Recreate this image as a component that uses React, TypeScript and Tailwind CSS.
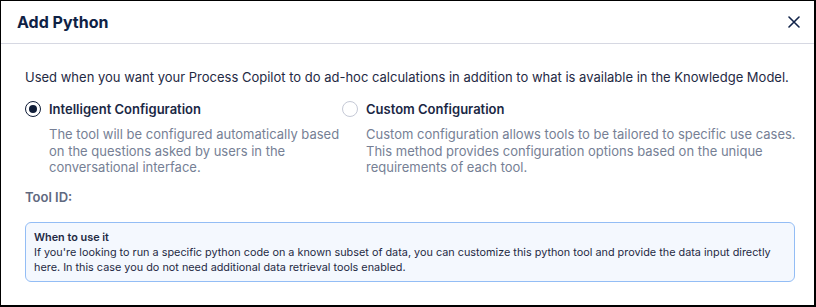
import React from "react";

const Radio = ({ checked }: { checked: boolean }) => (
  <span
    className={
      checked
        ? "flex h-4 w-4 shrink-0 items-center justify-center rounded-full border-[1.5px] border-[#101d38]"
        : "flex h-4 w-4 shrink-0 items-center justify-center rounded-full border border-[#c5c9d6]"
    }
  >
    {checked && <span className="h-2 w-2 rounded-full bg-[#101d38]" />}
  </span>
);

const Option = ({
  checked,
  label,
  text,
}: {
  checked: boolean;
  label: string;
  text: string;
}) => (
  <div className="flex flex-col">
    <div className="flex items-center gap-2">
      <Radio checked={checked} />
      <span className="text-[13px] leading-5 font-semibold text-[#1a2744]">{label}</span>
    </div>
    <p className="mt-[7px] pl-6 text-[13px] leading-[16.5px] text-[#767f95]">{text}</p>
  </div>
);

export default function App() {
  return (
    <div
      className="flex h-[307px] w-[816px] flex-col border border-r-2 border-b-2 border-black bg-white"
      style={{ fontFamily: "Inter, 'Noto Sans', sans-serif" }}
    >
      <div className="flex h-[43px] shrink-0 items-center justify-between border-b border-[#d6d8e2] pl-4 pr-[14px]">
        <h1 className="text-base font-bold text-[#0f2245]">Add Python</h1>
        <svg width="12" height="12" viewBox="0 0 12 12" fill="none">
          <path d="M1 1L11 11M11 1L1 11" stroke="#12244a" strokeWidth="1.6" strokeLinecap="round" />
        </svg>
      </div>

      <div className="flex flex-col pl-6 pr-[19px] pt-[23px]">
        <p className="text-[13px] leading-5 text-[#1f2a44]">
          Used when you want your Process Copilot to do ad-hoc calculations in addition to what is available in the Knowledge Model.
        </p>

        <div className="mt-[12px] -mr-3 grid grid-cols-[317px_1fr]">
          <Option
            checked
            label="Intelligent Configuration"
            text="The tool will be configured automatically based on the questions asked by users in the conversational interface."
          />
          <Option
            checked={false}
            label="Custom Configuration"
            text="Custom configuration allows tools to be tailored to specific use cases. This method provides configuration options based on the unique requirements of each tool."
          />
        </div>

        <div className="mt-[11px] text-[13px] leading-5 font-semibold text-[#5f6980]">Tool ID:</div>

        <div className="mt-[15px] rounded-md border border-[#93bdf5] bg-[#f4f8fe] px-2 pt-[7px] pb-[6px] text-[10.85px] leading-[15px] text-[#1f2a44]">
          <div className="font-semibold">When to use it</div>
          <p>
            If you're looking to run a specific python code on a known subset of data, you can customize this python tool and provide the data input directly here. In this case you do not need additional data retrieval tools enabled.
          </p>
        </div>
      </div>
    </div>
  );
}
